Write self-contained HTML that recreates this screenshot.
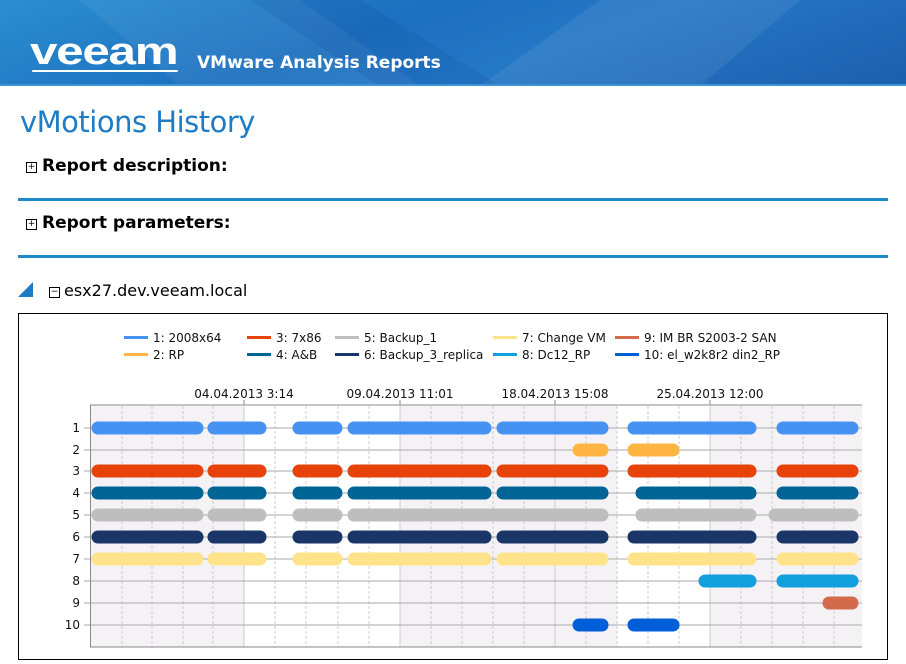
<!DOCTYPE html>
<html><head><meta charset="utf-8"><style>
body{margin:0;width:906px;height:664px;background:#fff;position:relative;overflow:hidden;font-family:"DejaVu Sans","Liberation Sans",sans-serif}
.hdr{position:absolute;left:0;top:0;width:906px;height:86px;background:linear-gradient(160deg,#2a8fd0 0%,#1d6fbf 40%,#2578c6 60%,#1b5fae 100%);overflow:hidden}
.a{position:absolute}
.t{position:absolute;color:#000;font-weight:bold;font-size:17px}
.box{position:absolute;border:1px solid #000;width:9px;height:9px;font-size:9px;line-height:8px;text-align:center;font-weight:normal}
.ln{position:absolute;left:18px;width:870px;height:3px;background:#1e88c8}
</style></head><body>
<div class="hdr">
<svg width="906" height="86" style="position:absolute;left:0;top:0">
<polygon points="80,0 300,0 420,86 180,86" fill="#ffffff" opacity="0.06"/>
<polygon points="600,0 800,0 700,86 480,86" fill="#ffffff" opacity="0.07"/>
<polygon points="250,0 360,0 500,86 380,86" fill="#0a3c8a" opacity="0.12"/>
<rect x="0" y="84" width="906" height="2" fill="#3c95d6"/>
</svg>
<div class="a" style="left:30px;top:33px;color:#fff;font:bold 38px 'Liberation Sans',sans-serif;letter-spacing:-1px;transform:scaleX(1.3);transform-origin:left;line-height:38px">veeam</div>
<div class="a" style="left:32px;top:70px;width:146px;height:2px;background:#fff;border-radius:2px"></div>
<div class="a" style="left:197px;top:53px;color:#fff;font-weight:bold;font-size:17px">VMware Analysis Reports</div>
</div>
<div class="a" style="left:20px;top:105px;color:#1e7cc4;font-size:29px;letter-spacing:-0.5px">vMotions History</div>
<div class="box" style="left:26px;top:162px">+</div>
<div class="t" style="left:42px;top:156px">Report description:</div>
<div class="ln" style="top:198px"></div>
<div class="box" style="left:26px;top:219px">+</div>
<div class="t" style="left:42px;top:213px">Report parameters:</div>
<div class="ln" style="top:255px"></div>
<svg class="a" style="left:18px;top:282px" width="18" height="18"><polygon points="0,15 15,15 15,0" fill="#1e7cc4"/></svg>
<div class="box" style="left:49px;top:287px">−</div>
<div class="a" style="left:64px;top:281px;font-size:16px">esx27.dev.veeam.local</div>
<svg class="a" style="left:0;top:0" width="906" height="664" font-family="DejaVu Sans, Liberation Sans, sans-serif" font-size="12">
<rect x="18.5" y="313.5" width="869" height="346" fill="none" stroke="#000"/>
<g font-size="12" fill="#111">
<rect x="124" y="336" width="24" height="3" fill="#4592f2"/><text x="153" y="342">1: 2008x64</text>
<rect x="124" y="353" width="24" height="3" fill="#ffb541"/><text x="153" y="359">2: RP</text>
<rect x="247" y="336" width="24" height="3" fill="#e6420a"/><text x="276" y="342">3: 7x86</text>
<rect x="247" y="353" width="24" height="3" fill="#006495"/><text x="276" y="359">4: A&amp;B</text>
<rect x="335" y="336" width="24" height="3" fill="#bebebe"/><text x="364" y="342">5: Backup_1</text>
<rect x="335" y="353" width="24" height="3" fill="#1a3668"/><text x="364" y="359">6: Backup_3_replica</text>
<rect x="493" y="336" width="24" height="3" fill="#ffe38a"/><text x="522" y="342">7: Change VM</text>
<rect x="493" y="353" width="24" height="3" fill="#129fdd"/><text x="522" y="359">8: Dc12_RP</text>
<rect x="615" y="336" width="24" height="3" fill="#d26a4b"/><text x="644" y="342">9: IM BR S2003-2 SAN</text>
<rect x="615" y="353" width="24" height="3" fill="#005ed9"/><text x="644" y="359">10: el_w2k8r2 din2_RP</text>
</g>
<rect x="90" y="406" width="154" height="241" fill="#f5f2f5"/>
<rect x="400" y="406" width="217" height="241" fill="#f5f2f5"/>
<rect x="710" y="406" width="152" height="241" fill="#f5f2f5"/>
<g stroke="#ccc" stroke-dasharray="3,2">
<line x1="122" y1="406" x2="122" y2="647"/><line x1="152" y1="406" x2="152" y2="647"/><line x1="183" y1="406" x2="183" y2="647"/><line x1="213" y1="406" x2="213" y2="647"/>
<line x1="275" y1="406" x2="275" y2="647"/><line x1="306" y1="406" x2="306" y2="647"/><line x1="338" y1="406" x2="338" y2="647"/><line x1="369" y1="406" x2="369" y2="647"/>
<line x1="431" y1="406" x2="431" y2="647"/><line x1="462" y1="406" x2="462" y2="647"/><line x1="493" y1="406" x2="493" y2="647"/><line x1="524" y1="406" x2="524" y2="647"/>
<line x1="586" y1="406" x2="586" y2="647"/><line x1="617" y1="406" x2="617" y2="647"/><line x1="648" y1="406" x2="648" y2="647"/><line x1="679" y1="406" x2="679" y2="647"/>
<line x1="741" y1="406" x2="741" y2="647"/><line x1="772" y1="406" x2="772" y2="647"/><line x1="803" y1="406" x2="803" y2="647"/><line x1="834" y1="406" x2="834" y2="647"/>
</g>
<g stroke="#ccc"><line x1="244" y1="406" x2="244" y2="647"/><line x1="400" y1="406" x2="400" y2="647"/><line x1="555" y1="406" x2="555" y2="647"/><line x1="710" y1="406" x2="710" y2="647"/></g>
<g stroke="#aaa">
<line x1="84" y1="428" x2="862" y2="428"/><line x1="84" y1="450" x2="862" y2="450"/><line x1="84" y1="471" x2="862" y2="471"/><line x1="84" y1="493" x2="862" y2="493"/><line x1="84" y1="515" x2="862" y2="515"/><line x1="84" y1="537" x2="862" y2="537"/><line x1="84" y1="559" x2="862" y2="559"/><line x1="84" y1="581" x2="862" y2="581"/><line x1="84" y1="603" x2="862" y2="603"/><line x1="84" y1="625" x2="862" y2="625"/>
</g>
<line x1="90" y1="405" x2="862" y2="405" stroke="#888"/>
<line x1="90.5" y1="405" x2="90.5" y2="647" stroke="#888"/>
<line x1="90" y1="647" x2="862" y2="647" stroke="#888"/>
<g stroke="#888"><line x1="244" y1="400" x2="244" y2="405"/><line x1="400" y1="400" x2="400" y2="405"/><line x1="555" y1="400" x2="555" y2="405"/><line x1="710" y1="400" x2="710" y2="405"/></g>
<g fill="#111" font-size="12" text-anchor="middle">
<text x="244" y="398">04.04.2013 3:14</text><text x="400" y="398">09.04.2013 11:01</text><text x="555" y="398">18.04.2013 15:08</text><text x="710" y="398">25.04.2013 12:00</text>
</g>
<g fill="#111" font-size="12" text-anchor="end">
<text x="80" y="432">1</text><text x="80" y="454">2</text><text x="80" y="475">3</text><text x="80" y="497">4</text><text x="80" y="519">5</text><text x="80" y="541">6</text><text x="80" y="563">7</text><text x="80" y="585">8</text><text x="80" y="607">9</text><text x="80" y="629">10</text>
</g>
<g stroke-width="13" stroke-linecap="round">
<g stroke="#4592f2"><line x1="98" y1="428" x2="197" y2="428"/><line x1="214" y1="428" x2="260" y2="428"/><line x1="299" y1="428" x2="336" y2="428"/><line x1="354" y1="428" x2="485" y2="428"/><line x1="503" y1="428" x2="602" y2="428"/><line x1="634" y1="428" x2="750" y2="428"/><line x1="783" y1="428" x2="852" y2="428"/></g>
<g stroke="#ffb541"><line x1="579" y1="450" x2="602" y2="450"/><line x1="634" y1="450" x2="673" y2="450"/></g>
<g stroke="#e6420a"><line x1="98" y1="471" x2="197" y2="471"/><line x1="214" y1="471" x2="260" y2="471"/><line x1="299" y1="471" x2="336" y2="471"/><line x1="354" y1="471" x2="485" y2="471"/><line x1="503" y1="471" x2="602" y2="471"/><line x1="634" y1="471" x2="750" y2="471"/><line x1="783" y1="471" x2="852" y2="471"/></g>
<g stroke="#006495"><line x1="98" y1="493" x2="197" y2="493"/><line x1="214" y1="493" x2="260" y2="493"/><line x1="299" y1="493" x2="336" y2="493"/><line x1="354" y1="493" x2="485" y2="493"/><line x1="503" y1="493" x2="602" y2="493"/><line x1="642" y1="493" x2="750" y2="493"/><line x1="783" y1="493" x2="852" y2="493"/></g>
<g stroke="#bebebe"><line x1="98" y1="515" x2="197" y2="515"/><line x1="214" y1="515" x2="260" y2="515"/><line x1="299" y1="515" x2="336" y2="515"/><line x1="354" y1="515" x2="602" y2="515"/><line x1="642" y1="515" x2="750" y2="515"/><line x1="775" y1="515" x2="852" y2="515"/></g>
<g stroke="#1a3668"><line x1="98" y1="537" x2="197" y2="537"/><line x1="214" y1="537" x2="260" y2="537"/><line x1="299" y1="537" x2="336" y2="537"/><line x1="354" y1="537" x2="485" y2="537"/><line x1="503" y1="537" x2="602" y2="537"/><line x1="634" y1="537" x2="750" y2="537"/><line x1="783" y1="537" x2="852" y2="537"/></g>
<g stroke="#ffe38a"><line x1="98" y1="559" x2="197" y2="559"/><line x1="214" y1="559" x2="260" y2="559"/><line x1="299" y1="559" x2="336" y2="559"/><line x1="354" y1="559" x2="485" y2="559"/><line x1="503" y1="559" x2="602" y2="559"/><line x1="634" y1="559" x2="750" y2="559"/><line x1="783" y1="559" x2="852" y2="559"/></g>
<g stroke="#129fdd"><line x1="705" y1="581" x2="750" y2="581"/><line x1="783" y1="581" x2="852" y2="581"/></g>
<g stroke="#d26a4b"><line x1="829" y1="603" x2="852" y2="603"/></g>
<g stroke="#005ed9"><line x1="579" y1="625" x2="602" y2="625"/><line x1="634" y1="625" x2="673" y2="625"/></g>
</g>
</svg>
</body></html>
